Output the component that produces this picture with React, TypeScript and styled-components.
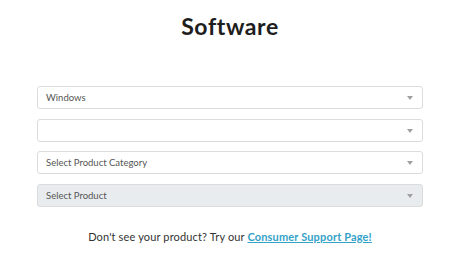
import React from "react";
import styled, { createGlobalStyle } from "styled-components";

const Global = createGlobalStyle`
  html, body { margin: 0; padding: 0; background: #ffffff; }
  body { width: 474px; height: 268px; overflow: hidden; }
`;

const Page = styled.div`
  width: 386px;
  padding: 11px 0 0 37px;
  display: flex;
  flex-direction: column;
`;

const Title = styled.h1`
  margin: 0;
  text-align: center;
  font-family: "Lato", "Noto Sans", sans-serif;
  font-weight: 700;
  font-size: 23px;
  line-height: 30px;
  letter-spacing: 0.6px;
  color: #1e1e1e;
`;

const Form = styled.div`
  margin-top: 45px;
  display: flex;
  flex-direction: column;
  gap: 9.5px;
`;

const Select = styled.div<{ $disabled?: boolean }>`
  box-sizing: border-box;
  height: 23px;
  border: 1px solid #dcdcdc;
  border-radius: 3px;
  background: ${(p) => (p.$disabled ? "#e9ecef" : "#ffffff")};
  display: flex;
  align-items: center;
  justify-content: space-between;
  padding: 0 9px 0 8px;
  font-family: "Lato", "Noto Sans", sans-serif;
  font-size: 9.5px;
  color: #555555;
`;

const Arrow = styled.span`
  width: 0;
  height: 0;
  border-left: 3px solid transparent;
  border-right: 3px solid transparent;
  border-top: 4px solid #a0a0a0;
  margin-top: 1px;
`;

const Footer = styled.p`
  margin: 23px 0 0;
  text-align: center;
  font-family: "Lato", "Noto Sans", sans-serif;
  font-size: 11px;
  color: #333333;
  letter-spacing: 0.15px;
`;

const Link = styled.a`
  color: #35a2c8;
  text-decoration: underline;
  font-weight: 700;
`;

const selects: { label: string; disabled?: boolean }[] = [
  { label: "Windows" },
  { label: "" },
  { label: "Select Product Category" },
  { label: "Select Product", disabled: true },
];

export default function App() {
  return (
    <>
      <Global />
      <Page>
        <Title>Software</Title>
        <Form>
          {selects.map((s, i) => (
            <Select key={i} $disabled={s.disabled}>
              <span>{s.label}</span>
              <Arrow />
            </Select>
          ))}
        </Form>
        <Footer>
          Don't see your product? Try our <Link href="#">Consumer Support Page!</Link>
        </Footer>
      </Page>
    </>
  );
}
